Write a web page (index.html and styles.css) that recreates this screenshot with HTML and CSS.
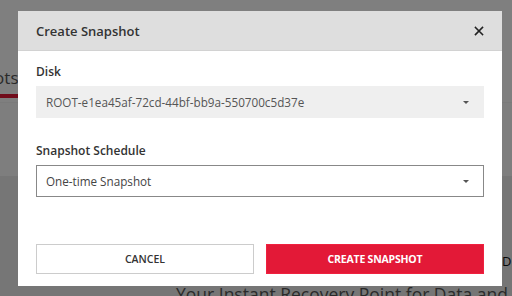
FILE: index.html
```html
<!DOCTYPE html>
<html lang="en">
<head>
  <meta charset="UTF-8">
  <meta name="viewport" content="width=device-width, initial-scale=1.0">
  <title>Create Snapshot</title>
  <link rel="stylesheet" href="styles.css">
</head>
<body>
  <div class="page">
    <div class="page-top">
      <div class="tabs">
        <span class="tab active">Snapshots</span>
      </div>
    </div>
    <div class="page-band"></div>
    <div class="page-hero">
      <p class="hero-side">D</p>
      <h2 class="hero-title">Your Instant Recovery Point for Data and Systems</h2>
    </div>
  </div>

  <div class="overlay">
    <div class="modal">
      <div class="modal-header">
        <h3 class="modal-title">Create Snapshot</h3>
        <button class="close-btn" aria-label="Close">
          <svg width="10" height="10" viewBox="0 0 10 10">
            <path d="M1.5 1.5 L8.5 8.5 M8.5 1.5 L1.5 8.5" stroke="#222" stroke-width="1.6" stroke-linecap="square"/>
          </svg>
        </button>
      </div>
      <div class="modal-body">
        <label class="field-label">Disk</label>
        <div class="select select-disabled">
          <span>ROOT-e1ea45af-72cd-44bf-bb9a-550700c5d37e</span>
          <span class="caret"></span>
        </div>

        <label class="field-label">Snapshot Schedule</label>
        <div class="select">
          <span>One-time Snapshot</span>
          <span class="caret"></span>
        </div>
      </div>
      <div class="modal-footer">
        <button class="btn btn-cancel">CANCEL</button>
        <button class="btn btn-primary">CREATE SNAPSHOT</button>
      </div>
    </div>
  </div>
</body>
</html>
```

FILE: styles.css
```css
/* Page behind the dialog */
body {
  margin: 0;
  font-family: 'Open Sans', 'Liberation Sans', sans-serif;
  width: 512px;
  height: 296px;
  overflow: hidden;
}

.page {
  height: 296px;
  background: #ececec;
  overflow: hidden;
}

.page-top {
  height: 102px;
  background: #ffffff;
  border-bottom: 1px solid #f4f4f4;
  overflow: hidden;
}

.tabs {
  padding-top: 66px;
  margin-left: -64px;
}

.tab {
  display: inline-block;
  font-size: 17px;
  color: #555;
  padding-bottom: 5px;
}

.tab.active {
  border-bottom: 4px solid #e31937;
}

.page-band {
  height: 73px;
  background: #fcfcfc;
}

.page-hero {
  padding: 76px 0 0 176px;
  overflow: hidden;
}

.hero-side {
  margin: 0 0 0 326px;
  font-size: 13px;
  color: #111;
  line-height: 18px;
}

.hero-title {
  margin: 12px 0 0 0;
  font-size: 17.5px;
  font-weight: 400;
  color: #555;
  white-space: nowrap;
  line-height: 24px;
}

/* Dialog */
.overlay {
  position: fixed;
  inset: 0;
  background: rgba(0, 0, 0, 0.5);
}

.modal {
  margin: 11px 0 0 18px;
  width: 484px;
  height: 275px;
  background: #ffffff;
  display: flex;
  flex-direction: column;
}

.modal-header {
  height: 39px;
  background: #dedede;
  border-bottom: 1px solid #d2d2d2;
  display: flex;
  align-items: center;
  justify-content: space-between;
  padding: 0 18px;
}

.modal-title {
  margin: 0;
  font-size: 13px;
  font-weight: 600;
  color: #333;
}

.close-btn {
  border: none;
  background: none;
  padding: 0;
  width: 10px;
  height: 10px;
  display: flex;
}

.modal-body {
  padding: 13px 18px 0 18px;
  display: flex;
  flex-direction: column;
}

.field-label {
  font-size: 12px;
  font-weight: 600;
  color: #333;
  margin-bottom: 6px;
  line-height: 16px;
}

.select {
  box-sizing: border-box;
  height: 32px;
  border: 1px solid #888;
  display: flex;
  align-items: center;
  justify-content: space-between;
  padding: 0 14px 0 9px;
  font-size: 11.7px;
  color: #444;
}

.select-disabled {
  background: #efefef;
  border-color: #efefef;
  color: #555;
  margin-bottom: 25px;
}

.caret {
  width: 0;
  height: 0;
  border-left: 3px solid transparent;
  border-right: 3px solid transparent;
  border-top: 3px solid #555;
}

.modal-footer {
  margin-top: auto;
  padding: 0 18px 12px 18px;
  display: flex;
  gap: 12px;
}

.btn {
  flex: 1;
  height: 30px;
  font-family: 'Open Sans', 'Liberation Sans', sans-serif;
  font-size: 10.5px;
  font-weight: 600;
  cursor: pointer;
}

.btn-cancel {
  background: #ffffff;
  border: 1px solid #cccccc;
  color: #333;
}

.btn-primary {
  background: #e31937;
  border: 1px solid #f0213f;
  color: #ffffff;
  font-weight: 700;
  letter-spacing: -0.2px;
}
```
